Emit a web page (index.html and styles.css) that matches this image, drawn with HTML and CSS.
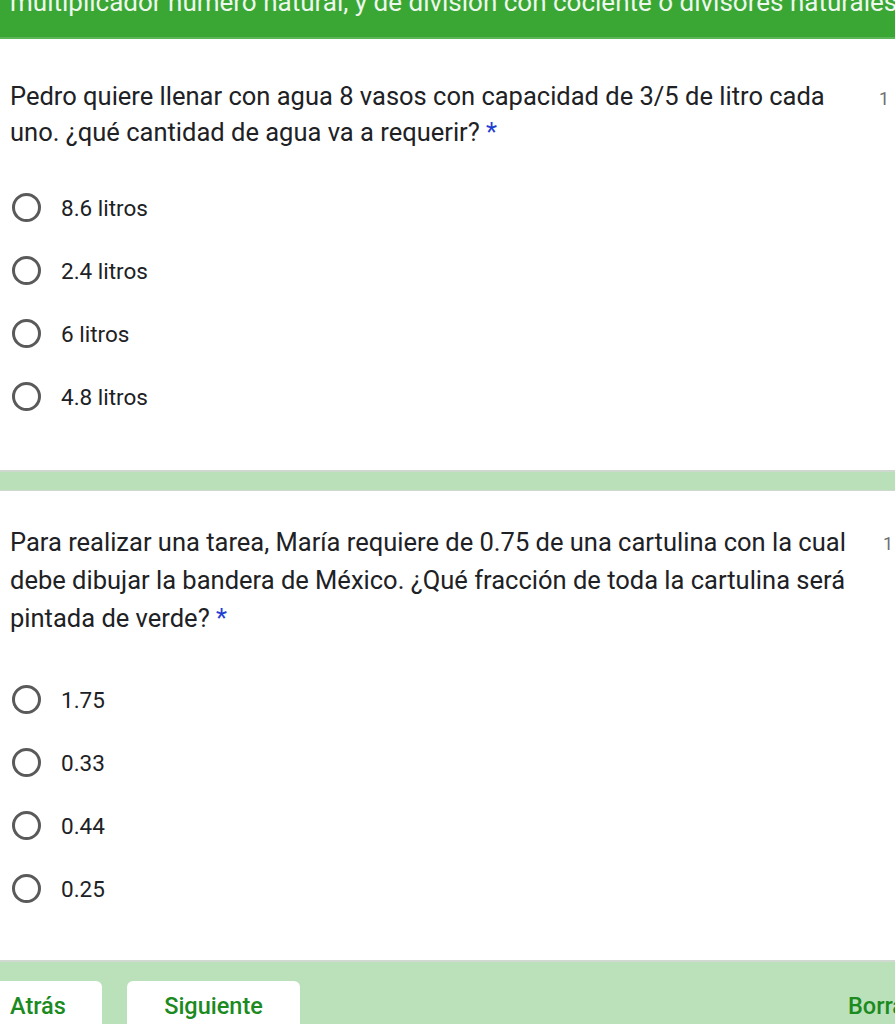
FILE: index.html
```html
<!DOCTYPE html>
<html lang="es">
<head>
<meta charset="utf-8">
<title>Formulario</title>
<link rel="stylesheet" href="styles.css">
</head>
<body>
<header class="topbar">
  <div class="topbar-text">multiplicador número natural, y de división con cociente o divisores naturales</div>
</header>

<section class="question q1">
  <div class="q-head">
    <div class="q-title">Pedro quiere llenar con agua 8 vasos con capacidad de 3/5 de litro cada uno. ¿qué cantidad de agua va a requerir? <span class="req">*</span></div>
    <div class="q-points">1</div>
  </div>
  <div class="options">
    <label class="option"><span class="radio"></span><span class="opt-text">8.6 litros</span></label>
    <label class="option"><span class="radio"></span><span class="opt-text">2.4 litros</span></label>
    <label class="option"><span class="radio"></span><span class="opt-text">6 litros</span></label>
    <label class="option"><span class="radio"></span><span class="opt-text">4.8 litros</span></label>
  </div>
</section>

<div class="divider"></div>

<section class="question q2">
  <div class="q-head">
    <div class="q-title">Para realizar una tarea, María requiere de 0.75 de una cartulina con la cual debe dibujar la bandera de México. ¿Qué fracción de toda la cartulina será pintada de verde? <span class="req">*</span></div>
    <div class="q-points">1</div>
  </div>
  <div class="options">
    <label class="option"><span class="radio"></span><span class="opt-text">1.75</span></label>
    <label class="option"><span class="radio"></span><span class="opt-text">0.33</span></label>
    <label class="option"><span class="radio"></span><span class="opt-text">0.44</span></label>
    <label class="option"><span class="radio"></span><span class="opt-text">0.25</span></label>
  </div>
</section>

<footer class="bottombar">
  <div class="btn btn-back">Atrás</div>
  <div class="btn btn-next">Siguiente</div>
  <div class="btn-clear">Borrar formulario</div>
</footer>
</body>
</html>
```

FILE: styles.css
```css
* { box-sizing: border-box; }
html, body {
  margin: 0;
  padding: 0;
  background: #ffffff;
  width: 895px;
  height: 1024px;
  overflow: hidden;
  font-family: Roboto, "Noto Sans", "Liberation Sans", sans-serif;
  color: #202124;
}

.topbar {
  height: 39px;
  background: #3aa735;
  border-bottom: 2px solid #5bb756;
  overflow: hidden;
  white-space: nowrap;
}
.topbar-text {
  color: #eef7ee;
  font-size: 26px;
  line-height: 28px;
  margin-top: -12px;
  padding-left: 10px;
}

.question {
  padding: 0 0 0 10px;
}
.q1 { padding-top: 39px; }
.q2 { padding-top: 32px; }

.q-head {
  display: flex;
  align-items: flex-start;
}
.q-title {
  flex: 1;
  font-size: 25.5px;
  line-height: 37px;
  color: #202124;
}
.q1 .q-title { line-height: 36px; }
.q2 .q-title { line-height: 38px; }
.req { color: #1f3fd1; }
.q-points {
  color: #6f6f6f;
  font-size: 18px;
  line-height: 37px;
  width: 30px;
  padding-left: 14px;
  padding-top: 2px;
}
.q2 .q-points { padding-left: 18px; }

.options {
  display: flex;
  flex-direction: column;
}
.q1 .options { margin-top: 26px; margin-bottom: 42px; }
.q2 .options { margin-top: 31px; margin-bottom: 40px; }

.option {
  display: flex;
  align-items: center;
  height: 63px;
}
.radio {
  width: 29px;
  height: 29px;
  border: 3px solid #5a5a5a;
  border-radius: 50%;
  margin-left: 2px;
  flex: none;
}
.opt-text {
  margin-left: 20px;
  font-size: 22.5px;
  color: #202124;
}

.divider {
  height: 21px;
  background: #b9e0b9;
  border-top: 2px solid #cfd8cf;
  border-bottom: 1px solid #cfd8cf;
}

.bottombar {
  height: 70px;
  background: #bbe1bb;
  border-top: 2px solid #d2d8d2;
  display: flex;
  align-items: flex-start;
  padding-top: 19px;
}
.btn {
  background: #ffffff;
  border-radius: 6px 6px 0 0;
  height: 60px;
  color: #1b8a1f;
  font-size: 23.5px;
  font-weight: 500;
  padding-top: 11px;
  text-align: center;
}
.btn-back {
  width: 112px;
  margin-left: -10px;
  text-align: left;
  padding-left: 20px;
}
.btn-next {
  width: 173px;
  margin-left: 25px;
}
.btn-clear {
  margin-left: auto;
  margin-right: -162px;
  color: #1b8a1f;
  font-size: 23.5px;
  font-weight: 500;
  padding-top: 11px;
  white-space: nowrap;
  width: 209px;
}
```
